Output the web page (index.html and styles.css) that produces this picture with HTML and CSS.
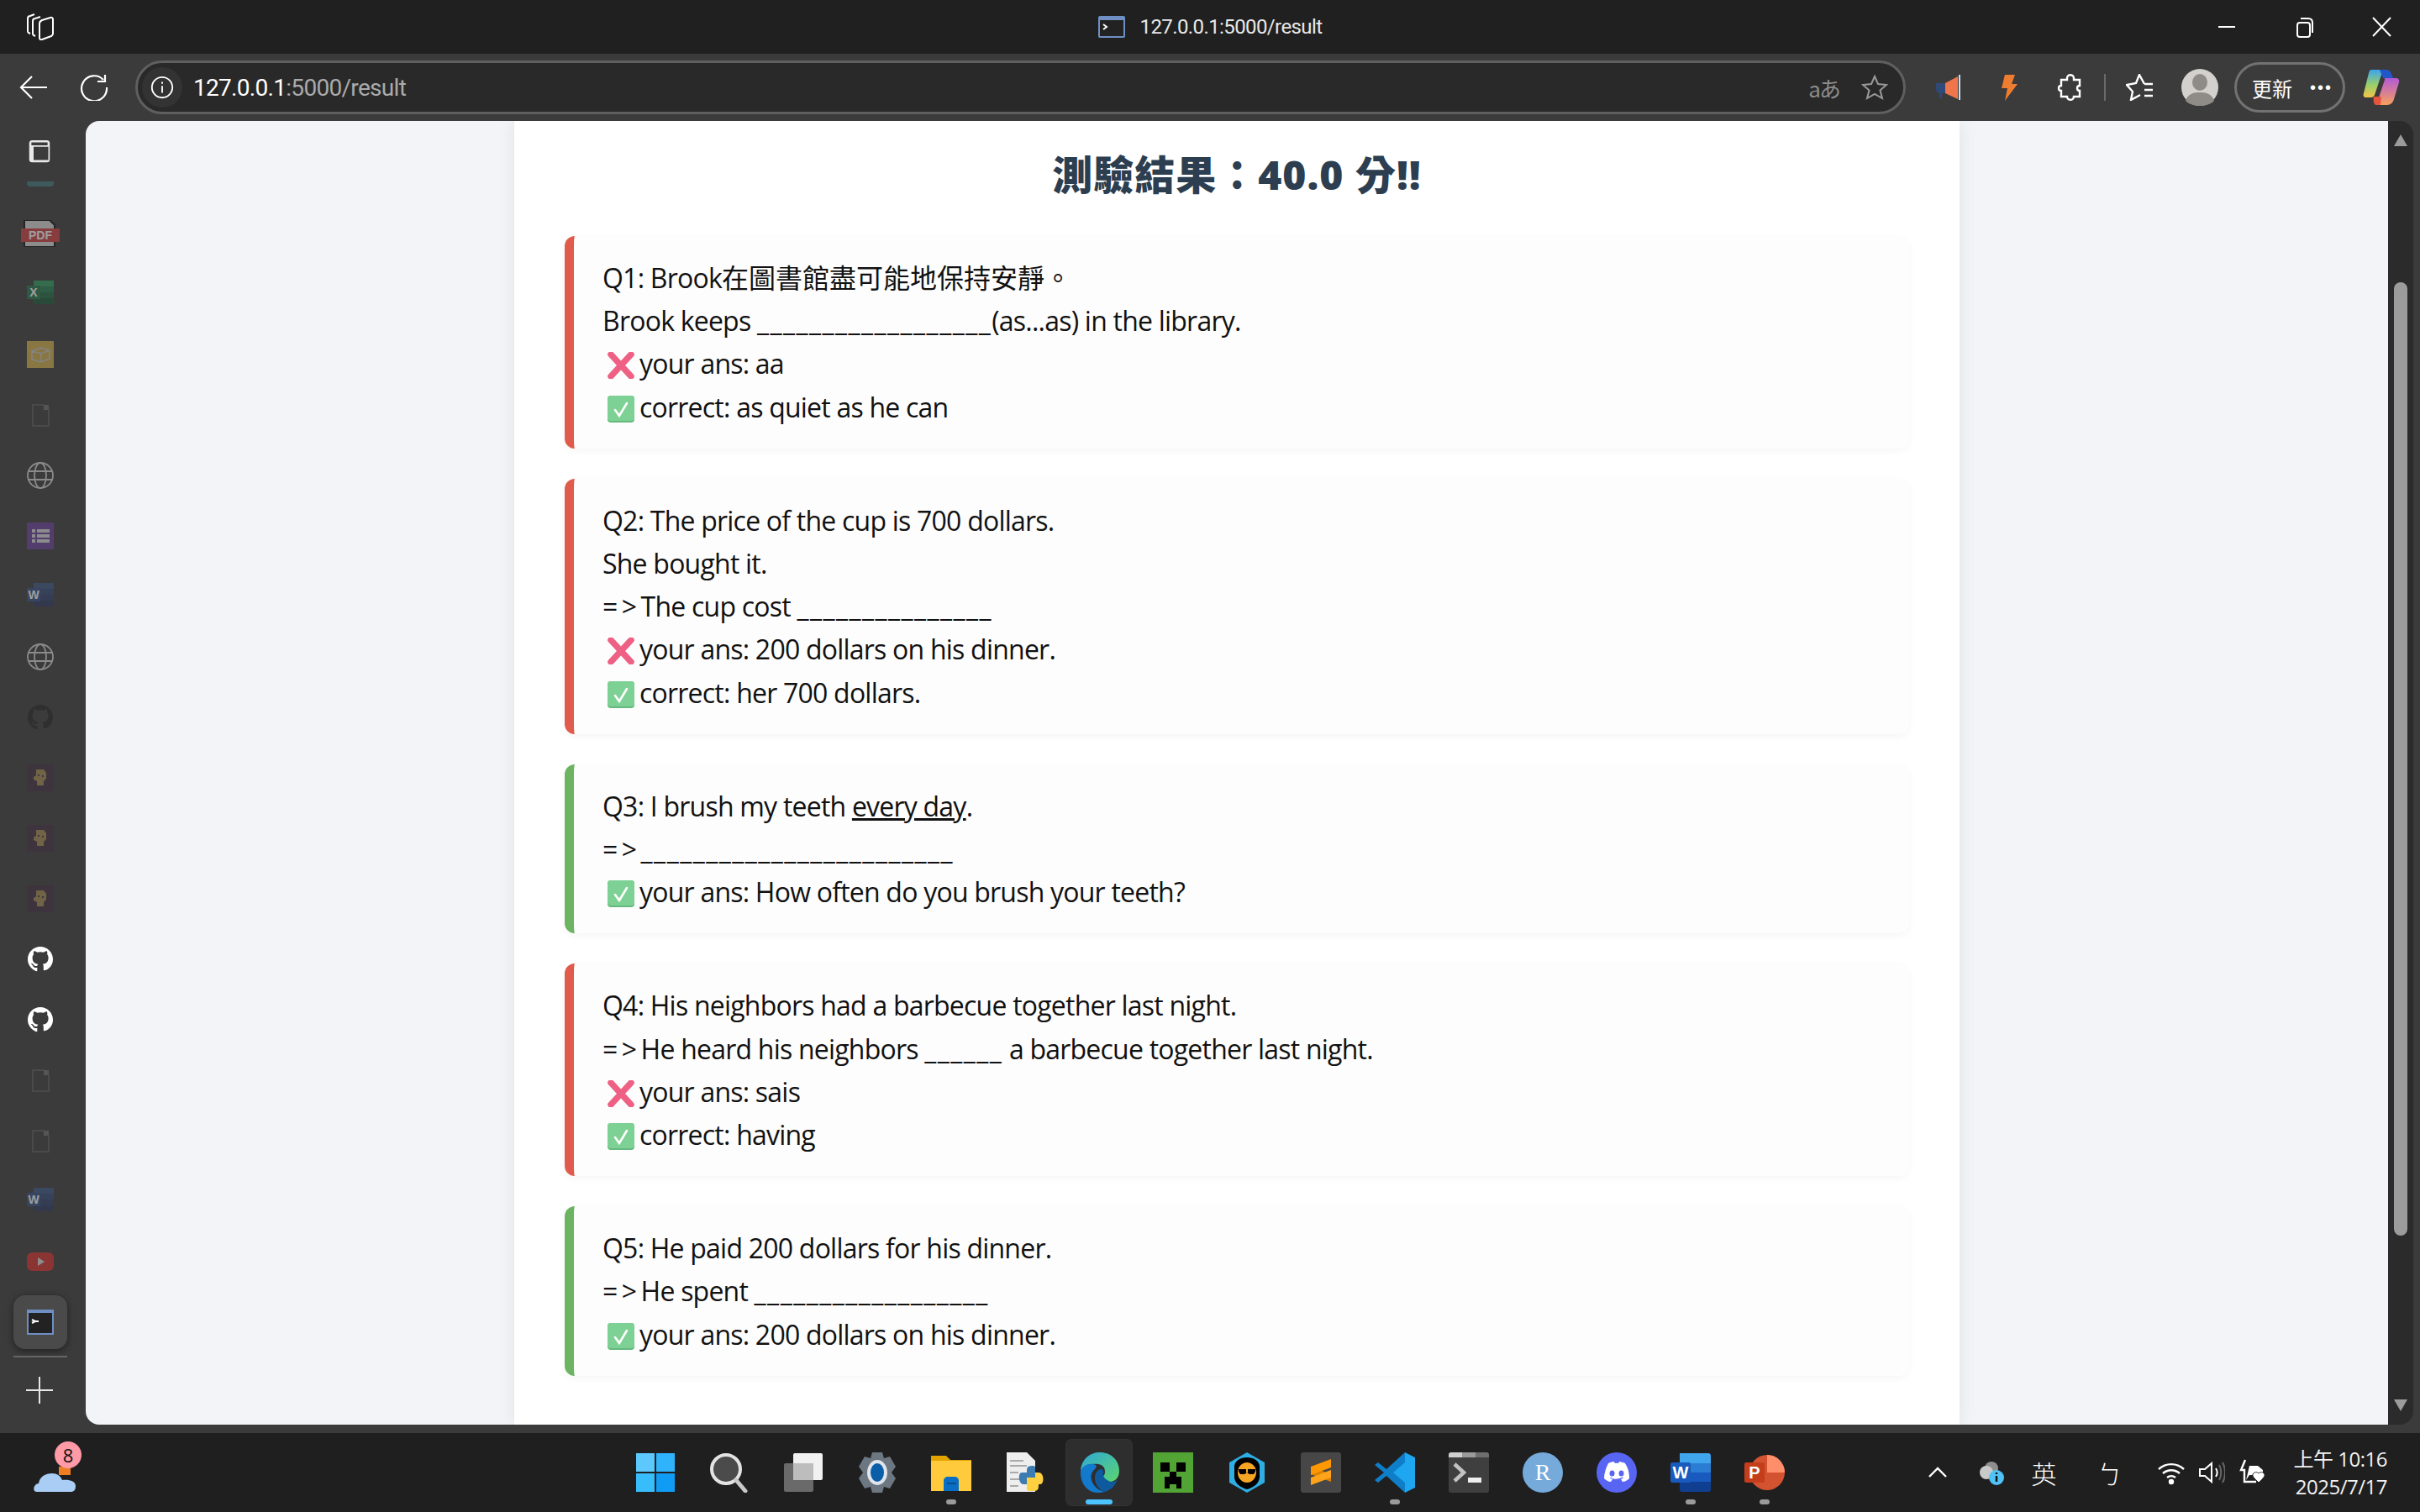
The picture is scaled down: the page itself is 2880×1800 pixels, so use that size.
FILE: index.html
```html
<!DOCTYPE html>
<html lang="zh-Hant">
<head>
    <meta charset="UTF-8">
    <title>127.0.0.1:5000/result</title>
    <link rel="stylesheet" href="styles.css">
</head>
<body>

    <svg class="defs" width="0" height="0">
        <symbol id="doc" viewBox="0 0 32 32"><path d="M7 4h13l6 6v19H7z" fill="none" stroke="#4a4a4a" stroke-width="2"/><path d="M20 4h6v6h-6z" fill="#555"/></symbol>
        <symbol id="globe" viewBox="0 0 32 32"><g fill="none" stroke="#8a8a8a" stroke-width="1.8"><circle cx="16" cy="16" r="15"/><ellipse cx="16" cy="16" rx="7" ry="15"/><path d="M2 11h28M2 21h28"/></g></symbol>
        <symbol id="octo" viewBox="0 0 32 32"><path fill-rule="evenodd" d="M16 1C7.700 1 1 7.700 1 16c0 6.600 4.300 12.200 10.300 14.200.7.100 1-.3 1-.7v-3.600c-4.200.9-5-1.800-5-1.800-.7-1.700-1.700-2.200-1.700-2.200-1.400-.9.100-.9.100-.9 1.500.1 2.300 1.500 2.300 1.500 1.300 2.300 3.500 1.600 4.400 1.200.1-1 .5-1.600 1-2-3.300-.4-6.800-1.700-6.800-7.400 0-1.600.6-3 1.500-4-.1-.4-.7-1.900.2-4 0 0 1.300-.4 4.100 1.500a14 14 0 0 1 7.400 0c2.900-1.900 4.100-1.500 4.100-1.500.8 2.100.3 3.600.2 4 1 1 1.500 2.400 1.500 4 0 5.800-3.500 7-6.800 7.400.5.500 1 1.400 1 2.800v4.100c0 .4.300.9 1 .7C26.700 28.200 31 22.600 31 16 31 7.700 24.300 1 16 1z"/></symbol>
        <symbol id="skull" viewBox="0 0 32 32"><path fill="#3f2f3f" d="M0 0h32v32H0z"/><path fill="#a88c50" d="M11 6h9l3 4v7l-3 3v5h-8v-5l-4-2v-3l3-2z"/><path fill="#3f2f3f" d="M13 12h2v2h-2zM18 13h2v2h-2z"/></symbol>
        <symbol id="word" viewBox="0 0 32 32"><path fill="#3a5685" d="M8 0h24v7H8z"/><path fill="#33497a" d="M8 7h24v7H8z"/><path fill="#2e406c" d="M8 14h24v7H8z"/><path fill="#2a3860" d="M8 21h24v7H8z"/><path fill="#34508a" d="M0 6h16v16H0z"/></symbol>
        <symbol id="cross" viewBox="0 0 32 32"><path d="M4 3l24 26M28 3L4 29" fill="none" stroke="#ee6184" stroke-width="7.500" stroke-linecap="round"/></symbol>
        <symbol id="check" viewBox="0 0 32 32"><rect width="32" height="32" rx="4" fill="#66b97e"/><rect width="32" height="30" rx="4" fill="#7ed194"/><path d="M9 17l5 7 9-15" fill="none" stroke="#fff" stroke-width="2.600" stroke-linecap="round"/></symbol>
    </svg>

    <div class="titlebar">
        <div class="tb-left">
            <svg class="ic32" viewBox="0 0 32 32" fill="none" stroke="#fff" stroke-width="2"><path d="M4 24l-2-1c-1-.5-1-1-1-2V6c0-2 1-3 3-3l5-2"/><path d="M10 27l-2-1c-1-.5-1-1-1-2V9c0-2 1-3 3-3l6-2"/><path d="M15 12c0-2 1-3 3-4l10-3c2-.5 3 .5 3 2v17c0 2-1 2.500-2 3l-11 4c-2 .5-3 0-3-2z"/></svg>
        </div>
        <div class="tb-title">
            <svg class="ic-fav" viewBox="0 0 32 26"><rect width="32" height="26" rx="2" fill="#6f8fc4"/><rect x="2" y="5" width="28" height="19" fill="#222"/><path d="M6 10l4 3-4 3" fill="none" stroke="#fff" stroke-width="2"/></svg>
            <span>127.0.0.1:5000/result</span>
        </div>
        <div class="tb-controls">
            <svg class="ic32" viewBox="0 0 32 32"><path d="M6 16h20" stroke="#fff" stroke-width="2"/></svg>
            <svg class="ic32" viewBox="0 0 32 32" fill="none" stroke="#fff" stroke-width="2"><rect x="8" y="11" width="15" height="17" rx="3"/><path d="M12 6h9c3 0 5 2 5 5v12"/></svg>
            <svg class="ic32" viewBox="0 0 32 32"><path d="M6 5l21 22M27 5L6 27" stroke="#fff" stroke-width="2"/></svg>
        </div>
    </div>

    <div class="toolbar">
        <svg class="tool-btn back" viewBox="0 0 36 32" fill="none" stroke="#fff" stroke-width="2.200"><path d="M34 16H3M16 3L3 16l13 13"/></svg>
        <svg class="tool-btn reload" viewBox="0 0 36 32" fill="none" stroke="#fff" stroke-width="2.200"><path d="M29 7a15 15 0 1 0 4 9M31 1v8h-9"/></svg>
        <div class="addressbar">
            <span class="info">
                <svg viewBox="0 0 32 32" fill="none" stroke="#fff" stroke-width="2"><circle cx="16" cy="16" r="13"/><path d="M16 14v9M16 9v2.500"/></svg>
            </span>
            <span class="url"><b>127.0.0.1</b>:5000/result</span>
            <span class="translate">aあ</span>
            <svg class="ic32 star" viewBox="0 0 32 32"><path d="M16 3l4 9 10 1-7.500 6.500L25 29l-9-5-9 5 2.500-9.500L2 13l10-1z" fill="none" stroke="#9a9a9a" stroke-width="2"/></svg>
        </div>
        <div class="tool-icons">
            <svg class="ic32" viewBox="0 0 32 32"><path fill="#2f4a78" d="M2 11h12v12H9v6H6v-6c-3 0-4-3-4-6z"/><path fill="#f0754a" d="M13 11l15-8v27l-15-7z"/><path stroke="#cfe0ee" stroke-width="2" d="M30 1v30"/></svg>
            <svg class="ic32" viewBox="0 0 32 32"><path fill="#ee7d30" d="M12 1h12l-4 11h7L12 32l3-15H8z"/></svg>
            <svg class="ic32" viewBox="0 0 32 32" fill="none" stroke="#fff" stroke-width="2.400"><path d="M12 5c0-5 8-5 8 0v2h7v7c-4 0-4 6 0 6v7h-7c0 5-8 5-8 0H5v-7c-4 0-4-6 0-6V7h7z"/></svg>
            <span class="tool-sep"></span>
            <svg class="ic32" viewBox="0 0 32 32" fill="none" stroke="#fff" stroke-width="2.400"><path d="M22 12L16 1l-4 10-11 2 7 8-2 10 11-6M22 12h10M22 19h10M22 26h10"/></svg>
            <svg class="avatar" viewBox="0 0 44 44"><circle cx="22" cy="22" r="22" fill="#d2d1cd"/><ellipse cx="22" cy="16" rx="9" ry="10" fill="#8f8c87"/><path d="M5 38c3-9 10-10 17-10s14 1 17 10c-8 8-26 8-34 0z" fill="#8f8c87"/></svg>
            <div class="update"><span>更新</span><span class="dots">•••</span></div>
            <svg class="copilot" viewBox="0 0 44 44"><defs><linearGradient id="cpa" x1="0" y1="0" x2="0" y2="1"><stop offset="0" stop-color="#3aa4ee"/><stop offset=".55" stop-color="#9ad06a"/><stop offset="1" stop-color="#f4c34a"/></linearGradient><linearGradient id="cpb" x1="0" y1="0" x2="0" y2="1"><stop offset="0" stop-color="#b35ad8"/><stop offset="1" stop-color="#f6a05c"/></linearGradient></defs><path fill="url(#cpa)" d="M10 1h14l-10 30c-1 2-2 3-5 3H4c-3 0-4-2-3-5L7 5c.5-2 1.500-4 3-4z"/><path fill="#2357c9" d="M20 1h8c3 0 5 2 6 5l2 5H24z"/><path fill="url(#cpb)" d="M26 11h13c3 0 5 2 4 5l-6 20c-1 4-4 7-8 7H16l10-30z"/><path fill="#e6553f" d="M13 33h9l-1 10h-5c-3 0-4-5-3-10z"/></svg>
        </div>
    </div>

    <div class="middle">
        <div class="sidebar">
            <div class="side-top">
                <svg class="ic32" viewBox="0 0 32 32"><rect x="2" y="1" width="28" height="30" rx="4" fill="#e8e8e8"/><path d="M5 4h22v4H5z" fill="#3b3b3b"/><rect x="8" y="10" width="20" height="18" fill="#3b3b3b"/></svg>
                <span class="side-scrolled"></span>
            </div>
            <div class="side-item dim"><svg class="ic-pdf" viewBox="0 0 46 32"><path d="M4 0h30l6 6v26H4z" fill="#ddd" stroke="#111" stroke-width="2"/><path fill="#d33f3f" d="M0 10h46v16H0z"/><text x="23" y="23" class="iconletter">PDF</text></svg></div>
            <div class="side-item dim"><svg class="ic-side" viewBox="0 0 32 32"><path fill="#2f9e62" d="M8 0h24v7H8z"/><path fill="#27804f" d="M8 7h24v7H8z"/><path fill="#1f6b42" d="M8 14h24v7H8z"/><path fill="#1a5a38" d="M8 21h24v7H8z"/><path fill="#237a4b" d="M0 6h16v16H0z"/><text x="8" y="19" class="iconletter">X</text></svg></div>
            <div class="side-item dim"><svg class="ic-side" viewBox="0 0 32 32"><path fill="#d4b24c" d="M0 0h32v32H0z"/><path fill="none" stroke="#ccc" stroke-width="1.500" d="M6 12l11-4 10 3v10l-10 4-11-3zM6 12l11 3 10-4M17 15v10"/></svg></div>
            <div class="side-item"><svg class="ic-side"><use href="#doc"/></svg></div>
            <div class="side-item"><svg class="ic-side"><use href="#globe"/></svg></div>
            <div class="side-item dim"><svg class="ic-side" viewBox="0 0 32 32"><path fill="#6b3fa0" d="M0 0h32v32H0z"/><path fill="#ddd" d="M6 8h4v4H6zM12 8h15v4H12zM6 14h4v4H6zM12 14h15v4H12zM6 20h4v4H6zM12 20h15v4H12z"/></svg></div>
            <div class="side-item dim"><svg class="ic-side" viewBox="0 0 32 32"><use href="#word"/><text x="8" y="19" class="iconletter">W</text></svg></div>
            <div class="side-item"><svg class="ic-side"><use href="#globe"/></svg></div>
            <div class="side-item"><svg class="ic-side octo-dim"><use href="#octo"/></svg></div>
            <div class="side-item dim"><svg class="ic-side"><use href="#skull"/></svg></div>
            <div class="side-item dim"><svg class="ic-side"><use href="#skull"/></svg></div>
            <div class="side-item dim"><svg class="ic-side"><use href="#skull"/></svg></div>
            <div class="side-item"><svg class="ic-side octo"><use href="#octo"/></svg></div>
            <div class="side-item"><svg class="ic-side octo"><use href="#octo"/></svg></div>
            <div class="side-item"><svg class="ic-side"><use href="#doc"/></svg></div>
            <div class="side-item"><svg class="ic-side"><use href="#doc"/></svg></div>
            <div class="side-item dim"><svg class="ic-side" viewBox="0 0 32 32"><use href="#word"/><text x="8" y="19" class="iconletter">W</text></svg></div>
            <div class="side-item dim"><svg class="ic-side" viewBox="0 0 32 32"><rect y="5" width="32" height="22" rx="6" fill="#d92f2f"/><path fill="#ddd" d="M13 11l8 5-8 5z"/></svg></div>
            <div class="side-item active"><svg class="ic-side" viewBox="0 0 32 32"><rect y="1" width="32" height="30" fill="#6f8fc4"/><rect x="2" y="5" width="28" height="24" fill="#222"/><path d="M6 13l4 2-4 2M10 15h4" fill="none" stroke="#fff" stroke-width="2"/></svg></div>
            <div class="side-line"></div>
            <svg class="side-plus" viewBox="0 0 32 32"><path d="M0 16h32M16 0v32" stroke="#e8e8e8" stroke-width="2"/></svg>
        </div>

        <div class="page">
            <div class="container">
                <h1>測驗結果：40.0 分!!</h1>

                <div class="card wrong">
                    <div>Q1: Brook<span class="zh">在圖書館盡可能地保持安靜。</span></div>
                    <div>Brook keeps <span class="blank">__________________</span>(as...as) in the library.</div>
                    <div><svg class="mark"><use href="#cross"/></svg>your ans: aa</div>
                    <div><svg class="mark"><use href="#check"/></svg>correct: as quiet as he can</div>
                </div>

                <div class="card wrong">
                    <div>Q2: The price of the cup is 700 dollars.</div>
                    <div>She bought it.</div>
                    <div><span class="to">=&gt;</span>The cup cost <span class="blank">_______________</span></div>
                    <div><svg class="mark"><use href="#cross"/></svg>your ans: 200 dollars on his dinner.</div>
                    <div><svg class="mark"><use href="#check"/></svg>correct: her 700 dollars.</div>
                </div>

                <div class="card right">
                    <div>Q3: I brush my teeth <u>every day</u>.</div>
                    <div><span class="to">=&gt;</span><span class="blank">________________________</span></div>
                    <div><svg class="mark"><use href="#check"/></svg>your ans: How often do you brush your teeth?</div>
                </div>

                <div class="card wrong">
                    <div>Q4: His neighbors had a barbecue together last night.</div>
                    <div><span class="to">=&gt;</span>He heard his neighbors <span class="blank">______</span> a barbecue together last night.</div>
                    <div><svg class="mark"><use href="#cross"/></svg>your ans: sais</div>
                    <div><svg class="mark"><use href="#check"/></svg>correct: having</div>
                </div>

                <div class="card right">
                    <div>Q5: He paid 200 dollars for his dinner.</div>
                    <div><span class="to">=&gt;</span>He spent <span class="blank">__________________</span></div>
                    <div><svg class="mark"><use href="#check"/></svg>your ans: 200 dollars on his dinner.</div>
                </div>
            </div>
        </div>

        <div class="scrollbar">
            <svg class="arrow" viewBox="0 0 18 18"><path fill="#9c9c9c" d="M9 2l8 14H1z"/></svg>
            <div class="thumb"></div>
            <svg class="arrow down" viewBox="0 0 18 18"><path fill="#9c9c9c" d="M1 2h16L9 16z"/></svg>
        </div>
    </div>

    <div class="taskbar">
        <div class="task-left">
            <div class="weather">
                <svg viewBox="0 0 52 40"><path fill="#ef7d22" d="M30 8h14v10H30z"/><path fill="#a9cdf5" d="M3 38c-4 0-4-9 3-10 1-8 8-12 16-12 6 0 10 3 12 8 8-1 16 1 16 7s-3 7-6 7z"/></svg>
                <span class="badge">8</span>
            </div>
        </div>

        <div class="task-apps">
            <div class="app"><svg class="ic48" viewBox="0 0 48 48"><path fill="#5cc8fb" d="M1 1h22v22H1z"/><path fill="#2fb4fb" d="M25 1h22v22H25z"/><path fill="#38bdfb" d="M1 25h22v22H1z"/><path fill="#0f9cf5" d="M25 25h22v22H25z"/></svg></div>
            <div class="app"><svg class="ic48" viewBox="0 0 48 48" fill="none"><circle cx="20" cy="20" r="17" fill="#4b4b4b" stroke="#e3e3e3" stroke-width="4"/><path d="M32 33l11 13" stroke="#c9c9c9" stroke-width="5" stroke-linecap="round"/></svg></div>
            <div class="app"><svg class="ic48" viewBox="0 0 48 48"><rect x="12" y="1" width="35" height="32" rx="2" fill="#f1f1f1"/><rect x="1" y="13" width="35" height="34" rx="2" fill="#6a6a6a"/><rect x="12" y="13" width="24" height="20" fill="#bdbdbd"/></svg></div>
            <div class="app"><svg class="ic48" viewBox="0 0 48 48"><path fill="#6d7782" d="M18 0h12l2 7 7-2 7 12-5 7 5 7-7 12-7-2-2 7H18l-2-7-7 2-7-12 5-7-5-7L9 5l7 2z"/><ellipse cx="24" cy="24" rx="12" ry="15" fill="#dfe5ea"/><ellipse cx="24" cy="24" rx="8" ry="11" fill="#0b5ea8"/></svg></div>
            <div class="app open"><svg class="ic48" viewBox="0 0 48 48"><path fill="#e3a400" d="M0 4h18l5 5h25v10H0z"/><path fill="#ffcb3d" d="M0 10h48v36H0z"/><path fill="#0a6fc4" d="M15 46V34c0-3 2-5 5-5h8c3 0 5 2 5 5v12z"/><path fill="#084f8f" d="M19 36h11v2H19z"/></svg></div>
            <div class="app"><svg class="ic48" viewBox="0 0 48 48"><path fill="#eee" d="M2 0h24l10 10v37H2z"/><path stroke="#aaa" stroke-width="2" d="M6 10h16M6 16h20M6 24h10M6 32h14M6 40h10"/><path fill="#3d7cb2" d="M32 16c-6 0-6 3-6 8H20c-5 0-4 14 2 14h4v-6h10v-14c0-2-2-2-4-2z"/><path fill="#ffd03f" d="M34 46c6 0 6-3 6-8h2c5 0 5-14-2-14h-4v6H26v14c0 2 4 2 8 2z"/></svg></div>
            <div class="app active"><svg class="ic48" viewBox="0 0 48 48"><defs><linearGradient id="edge" x1="0" y1="0" x2="1" y2="1"><stop offset="0" stop-color="#2fa7d8"/><stop offset="1" stop-color="#5bd66d"/></linearGradient></defs><path fill="url(#edge)" d="M2 22C3 8 13 0 25 0c13 0 23 9 23 22 0 8-5 13-11 13-5 0-9-2-9-5 0-2 3-2 3-7C31 14 23 13 15 14 8 15 4 18 2 22z"/><path fill="#1279cc" d="M2 22c3-7 10-9 15-8 6 1 4 4 0 8-6 7-1 22 14 25-4 1-7 1-9 1C10 48 1 36 2 22z"/><path fill="#0f5a9e" d="M22 22c5-4 8-1 7 3-1 3 2 8 9 10 3 1 6-1 8-3-3 9-9 13-15 15-10-3-16-17-9-25z"/></svg><span class="active-dot"></span></div>
            <div class="app"><svg class="ic48" viewBox="0 0 48 48"><path fill="#52a535" d="M0 0h48v48H0z"/><path d="M9 12h11v11H9zM28 12h11v11H28zM20 23h8v6h6v14h-6v-5h-8v5h-6V29h6z"/></svg></div>
            <div class="app"><svg class="ic48" viewBox="0 0 48 48"><path fill="#2eaee2" d="M24 0l21 12v24L24 48 3 36V12z"/><path d="M24 6c8 0 14 4 15 10v14c-1 8-8 12-15 14-7-2-14-6-15-14V16C10 10 16 6 24 6z"/><ellipse cx="24" cy="24" rx="11" ry="12" fill="#f6a623"/><path d="M14 20h9v4h2v-4h9v3l-2 3h-5l-3-2-3 2h-5l-2-3z"/></svg></div>
            <div class="app"><svg class="ic48" viewBox="0 0 48 48"><rect width="48" height="48" rx="3" fill="#474747"/><path fill="#d98200" d="M12 17l24 9v9L12 26z"/><path fill="#ff9800" d="M36 8v10L12 27V17z"/><path fill="#ffa31a" d="M12 30l24-9v9L12 39z"/></svg></div>
            <div class="app open"><svg class="ic48" viewBox="0 0 48 48"><path fill="#0e7ec8" d="M36 0v48L14 28 4 36 0 33l11-9L0 15l4-3 10 8z"/><path fill="#1fa6f0" d="M36 0l12 6v36l-12 6zM36 12L22 24l14 12z"/></svg></div>
            <div class="app"><svg class="ic48" viewBox="0 0 48 48"><rect width="48" height="48" rx="3" fill="#3f3f3f"/><path fill="#cfcfcf" d="M0 3c0-2 1-3 3-3h13v6H0z"/><path fill="#9a9a9a" d="M16 0h16v6H16z"/><path fill="#6e6e6e" d="M32 0h13c2 0 3 1 3 3v3H32z"/><path d="M7 14l11 10-11 10" fill="none" stroke="#c2c2c2" stroke-width="4.500"/><path fill="#eee" d="M23 30h16v6H23z"/></svg></div>
            <div class="app"><svg class="ic48" viewBox="0 0 48 48"><circle cx="24" cy="24" r="24" fill="#75aadb"/><text x="24" y="33" class="iconr">R</text></svg></div>
            <div class="app"><svg class="ic48" viewBox="0 0 48 48"><circle cx="24" cy="24" r="24" fill="#5865f2"/><path fill="#fff" d="M14 13c3-1.500 6-2 7-2l.7 2c1.500-.2 3-.2 4.600 0L27 11c2 0 5 1 7 2 4 6 5 12 5 18-2 2-5 4-8 4l-2-3 3-1.500-1-1c-6 3-12 3-14 0l-1 1 3 1.500-2 3c-3 0-6-2-8-4 0-6 2-12 5-18z"/><ellipse cx="18.500" cy="25" rx="3" ry="3.500" fill="#5865f2"/><ellipse cx="29.500" cy="25" rx="3" ry="3.500" fill="#5865f2"/></svg></div>
            <div class="app open"><svg class="ic48" viewBox="0 0 48 48"><path fill="#41a5ee" d="M11 1h34c1.500 0 3 1 3 3v9H11z"/><path fill="#2b7cd3" d="M11 13h37v11H11z"/><path fill="#185abd" d="M11 24h37v11H11z"/><path fill="#103f91" d="M11 35h37v9c0 2-1 3-3 3H14c-2 0-3-1-3-3z"/><rect y="12" width="24" height="24" rx="2" fill="#185abd"/><text x="12" y="31" class="iconw">W</text></svg></div>
            <div class="app open"><svg class="ic48" viewBox="0 0 48 48"><circle cx="27" cy="24" r="21" fill="#d35230"/><path fill="#ff8f6b" d="M27 3a21 21 0 0 1 21 21H27z"/><rect y="12" width="24" height="24" rx="2" fill="#c43e1c"/><text x="12" y="31" class="iconw">P</text></svg></div>
        </div>

        <div class="task-tray">
            <svg class="ic24 chevron" viewBox="0 0 24 24"><path d="M2 17l10-10 10 10" fill="none" stroke="#fff" stroke-width="2.400"/></svg>
            <svg class="ic32 onedrive" viewBox="0 0 32 32"><circle cx="16" cy="11" r="8" fill="#8f8f8f"/><circle cx="10" cy="16" r="8" fill="#c9c9c9"/><circle cx="22" cy="22" r="9" fill="#4fc3f7"/><path d="M22 20v7M22 16v2" stroke="#111" stroke-width="2.400"/></svg>
            <span class="ime ime-en">英</span>
            <span class="ime ime-bo">ㄅ</span>
            <svg class="ic32 wifi" viewBox="0 0 32 32" fill="none" stroke="#fff" stroke-width="2.400"><path d="M1 12a22 22 0 0 1 30 0M6 17a15 15 0 0 1 20 0M11 22a8 8 0 0 1 10 0"/><circle cx="16" cy="27" r="2" fill="#fff"/></svg>
            <svg class="ic32 volume" viewBox="0 0 32 32" fill="none" stroke="#fff" stroke-width="2"><path d="M2 12h6l8-7v22l-8-7H2z"/><path d="M21 11c2 3 2 7 0 10"/><path d="M25 7c3 5 3 13 0 18M29 4c4 7 4 17 0 24" stroke="#666"/></svg>
            <svg class="ic32 battery" viewBox="0 0 32 32"><path d="M8 1L3 13h4v14h14" fill="none" stroke="#fff" stroke-width="2.400"/><path d="M13 8h10l6 5v6H13l-4 6z" fill="#fff"/><path d="M17 18c2-3 5-3 7-1 2-2 5-2 7 1 1 3-4 7-7 10-3-3-8-7-7-10z" fill="#fff" stroke="#1f1f1f"/></svg>
            <div class="clock"><div>上午 10:16</div><div>2025/7/17</div></div>
        </div>
    </div>

</body>
</html>
```

FILE: styles.css
```css
* {
    box-sizing: border-box;
}
html, body {
    margin: 0;
    height: 100%;
}
body {
    width: 2880px;
    height: 1800px;
    overflow: hidden;
    display: flex;
    flex-direction: column;
    background: #3b3b3b;
    font-family: "Open Sans", "Noto Sans CJK TC", sans-serif;
}
svg {
    display: block;
    flex: none;
}
.defs {
    position: absolute;
}
.ic32 {
    width: 32px;
    height: 32px;
}
.ic24 {
    width: 24px;
    height: 24px;
}
.ic48 {
    width: 48px;
    height: 48px;
}
.iconletter {
    fill: #fff;
    font: bold 14px "Liberation Sans", sans-serif;
    text-anchor: middle;
}
.iconw {
    fill: #fff;
    font: bold 20px "Liberation Sans", sans-serif;
    text-anchor: middle;
}
.iconr {
    fill: #fff;
    font: 28px "Liberation Serif", serif;
    text-anchor: middle;
}

/* title bar */
.titlebar {
    height: 64px;
    flex: none;
    background: #202020;
    display: grid;
    grid-template-columns: 1fr auto 1fr;
    align-items: center;
    color: #fff;
}
.tb-left {
    padding-left: 32px;
}
.tb-title {
    display: flex;
    align-items: center;
    gap: 18px;
    font-size: 24px;
    color: #e8e8e8;
    font-family: "Roboto", sans-serif;
    letter-spacing: -0.600px;
}
.ic-fav {
    width: 32px;
    height: 26px;
}
.tb-controls {
    display: flex;
    justify-content: flex-end;
    gap: 60px;
    padding-right: 30px;
}

/* toolbar */
.toolbar {
    height: 80px;
    flex: none;
    background: #3b3b3b;
    display: flex;
    align-items: center;
    padding: 0 24px 0 22px;
}
.tool-btn {
    width: 36px;
    height: 32px;
}
.reload {
    margin-left: 36px;
}
.addressbar {
    width: 2119px;
    height: 64px;
    margin-left: 31px;
    border: 3px solid #5f5f5f;
    border-radius: 32px;
    background: #292929;
    display: flex;
    align-items: center;
    padding: 0 18px 0 5px;
}
.info {
    width: 48px;
    height: 48px;
    border-radius: 50%;
    background: #333;
    display: flex;
    align-items: center;
    justify-content: center;
}
.info svg {
    width: 30px;
    height: 30px;
}
.url {
    margin-left: 13px;
    font-size: 28px;
    color: #aaa;
    font-family: "Roboto", sans-serif;
    letter-spacing: -0.700px;
    flex: 1;
}
.url b {
    font-weight: 400;
    color: #fff;
}
.translate {
    font-size: 26px;
    color: #8d8d8d;
    margin-right: 26px;
    letter-spacing: -2px;
    font-family: "Noto Sans CJK JP", sans-serif;
}
.tool-icons {
    flex: 1;
    display: flex;
    align-items: center;
    margin-left: 34px;
}
.tool-icons > .ic32:nth-child(2) {
    margin-left: 40px;
}
.tool-icons > .ic32:nth-child(3) {
    margin-left: 42px;
}
.tool-sep {
    width: 2px;
    height: 32px;
    background: #6a6a6a;
    margin: 0 24px;
}
.avatar {
    width: 44px;
    height: 44px;
    margin-left: 34px;
}
.update {
    width: 132px;
    height: 60px;
    margin-left: 19px;
    border: 3px solid #727272;
    border-radius: 30px;
    display: flex;
    align-items: center;
    justify-content: space-between;
    padding: 0 12px 0 18px;
    color: #fff;
    font-size: 24px;
}
.dots {
    font-size: 20px;
    letter-spacing: 2px;
    font-family: "Liberation Sans", sans-serif;
}
.copilot {
    width: 44px;
    height: 44px;
    margin-left: 21px;
}

/* middle */
.middle {
    flex: none;
    height: 1552px;
    display: flex;
    background: #3b3b3b;
}

.sidebar {
    width: 102px;
    flex: none;
    display: flex;
    flex-direction: column;
    align-items: center;
}
.side-top {
    height: 98px;
    padding-top: 20px;
    display: flex;
    flex-direction: column;
    align-items: center;
}
.side-top .ic32 {
    width: 28px;
    height: 32px;
    margin-left: -8px;
}
.side-scrolled {
    width: 32px;
    height: 6px;
    margin-top: 20px;
    background: #3f5a5c;
    border-radius: 0 0 4px 4px;
    margin-left: -6px;
}
.side-item {
    width: 64px;
    height: 72px;
    flex: none;
    display: flex;
    align-items: center;
    justify-content: center;
    margin-right: 6px;
}
.ic-side {
    width: 32px;
    height: 32px;
}
.ic-pdf {
    width: 46px;
    height: 32px;
}
.dim svg {
    opacity: .5;
}
.octo {
    fill: #fff;
}
.octo-dim {
    fill: #2f2f2f;
}
.side-item.active {
    height: 64px;
    margin-top: 4px;
    background: #4a4a4a;
    border-radius: 14px;
    box-shadow: 0 2px 8px rgba(0,0,0,.45);
}
.side-line {
    width: 64px;
    height: 2px;
    margin: 8px 6px 0 0;
    background: #666;
}
.side-plus {
    width: 32px;
    height: 32px;
    margin: 23px 8px 0 0;
}

/* page */
.page {
    flex: 1;
    background: #f2f4f8;
    overflow: hidden;
    border-radius: 16px 0 0 16px;
}
.container {
    width: 1720px;
    margin: 0 auto;
    padding: 25px 60px 0;
    background: #fff;
    min-height: 100%;
    box-shadow: 0 0 20px rgba(0,0,0,.08);
}
h1 {
    margin: 0 0 35px;
    font-size: 48px;
    line-height: 77px;
    font-weight: 800;
    letter-spacing: 1px;
    color: #2c3e50;
    text-align: center;
}
.card {
    background: #fdfdfd;
    border-left: 11px solid #ccc;
    border-radius: 12px;
    padding: 24px 34px;
    margin-bottom: 36px;
    font-size: 32px;
    line-height: 51.200px;
    color: #111;
    letter-spacing: -0.780px;
    box-shadow: 0 3px 10px rgba(0,0,0,.04);
}
.wrong {
    border-left-color: #e05b4b;
}
.right {
    border-left-color: #6cb462;
}
.blank {
    letter-spacing: 1.500px;
}
.zh {
    letter-spacing: 0;
}
.to {
    letter-spacing: 4.500px;
}
.mark {
    display: inline-block;
    width: 32px;
    height: 32px;
    margin: 0 6px 0 6px;
    vertical-align: -6px;
}

/* scrollbar */
.scrollbar {
    width: 30px;
    flex: none;
    background: #2b2b2b;
    border-radius: 0 16px 16px 0;
    margin-right: 8px;
    display: flex;
    flex-direction: column;
    align-items: center;
    padding-top: 14px;
}
.arrow {
    width: 18px;
    height: 18px;
}
.thumb {
    width: 16px;
    height: 1135px;
    margin-top: 160px;
    background: #9c9c9c;
    border-radius: 8px;
}
.down {
    margin-top: 193px;
}

/* task bar */
.taskbar {
    margin-top: 10px;
    height: 94px;
    flex: none;
    background: #1f1f1f;
    border-top: 0;
    display: grid;
    grid-template-columns: 1fr auto 1fr;
    align-items: center;
    color: #fff;
}
.task-left {
    padding-left: 40px;
}
.weather {
    position: relative;
    width: 52px;
    height: 40px;
    margin-top: 10px;
}
.weather svg {
    width: 52px;
    height: 40px;
}
.badge {
    position: absolute;
    top: -22px;
    left: 25px;
    width: 32px;
    height: 32px;
    border-radius: 50%;
    background: #ff9aa6;
    color: #111;
    font-size: 22px;
    line-height: 32px;
    text-align: center;
}
.task-apps {
    display: flex;
    align-items: center;
    gap: 8px;
}
.app {
    position: relative;
    width: 80px;
    height: 80px;
    display: flex;
    align-items: center;
    justify-content: center;
    border-radius: 8px;
}
.app.active {
    background: #2e2e2e;
    box-shadow: inset 0 0 0 1px #333;
}
.app.open::after {
    content: "";
    position: absolute;
    left: 34px;
    bottom: 2px;
    width: 12px;
    height: 6px;
    border-radius: 3px;
    background: #9b9b9b;
}
.active-dot {
    position: absolute;
    left: 24px;
    bottom: 2px;
    width: 32px;
    height: 6px;
    border-radius: 3px;
    background: #4cc2ff;
}
.task-tray {
    display: flex;
    align-items: center;
    justify-content: flex-end;
    padding-right: 39px;
}
.onedrive {
    margin-left: 36px;
}
.ime {
    font-size: 30px;
    line-height: 1;
    color: #fff;
    font-family: "Noto Sans CJK TC", sans-serif;
    font-weight: 300;
}
.ime-en {
    margin-left: 32px;
}
.ime-bo {
    margin-left: 48px;
}
.wifi {
    margin-left: 42px;
}
.volume {
    margin-left: 16px;
}
.battery {
    margin-left: 16px;
}
.clock {
    margin-left: 34px;
    font-size: 24px;
    line-height: 33px;
    text-align: right;
    color: #f2f2f2;
    font-family: "Open Sans", "Noto Sans CJK TC", sans-serif;
    letter-spacing: -0.500px;
}
```
